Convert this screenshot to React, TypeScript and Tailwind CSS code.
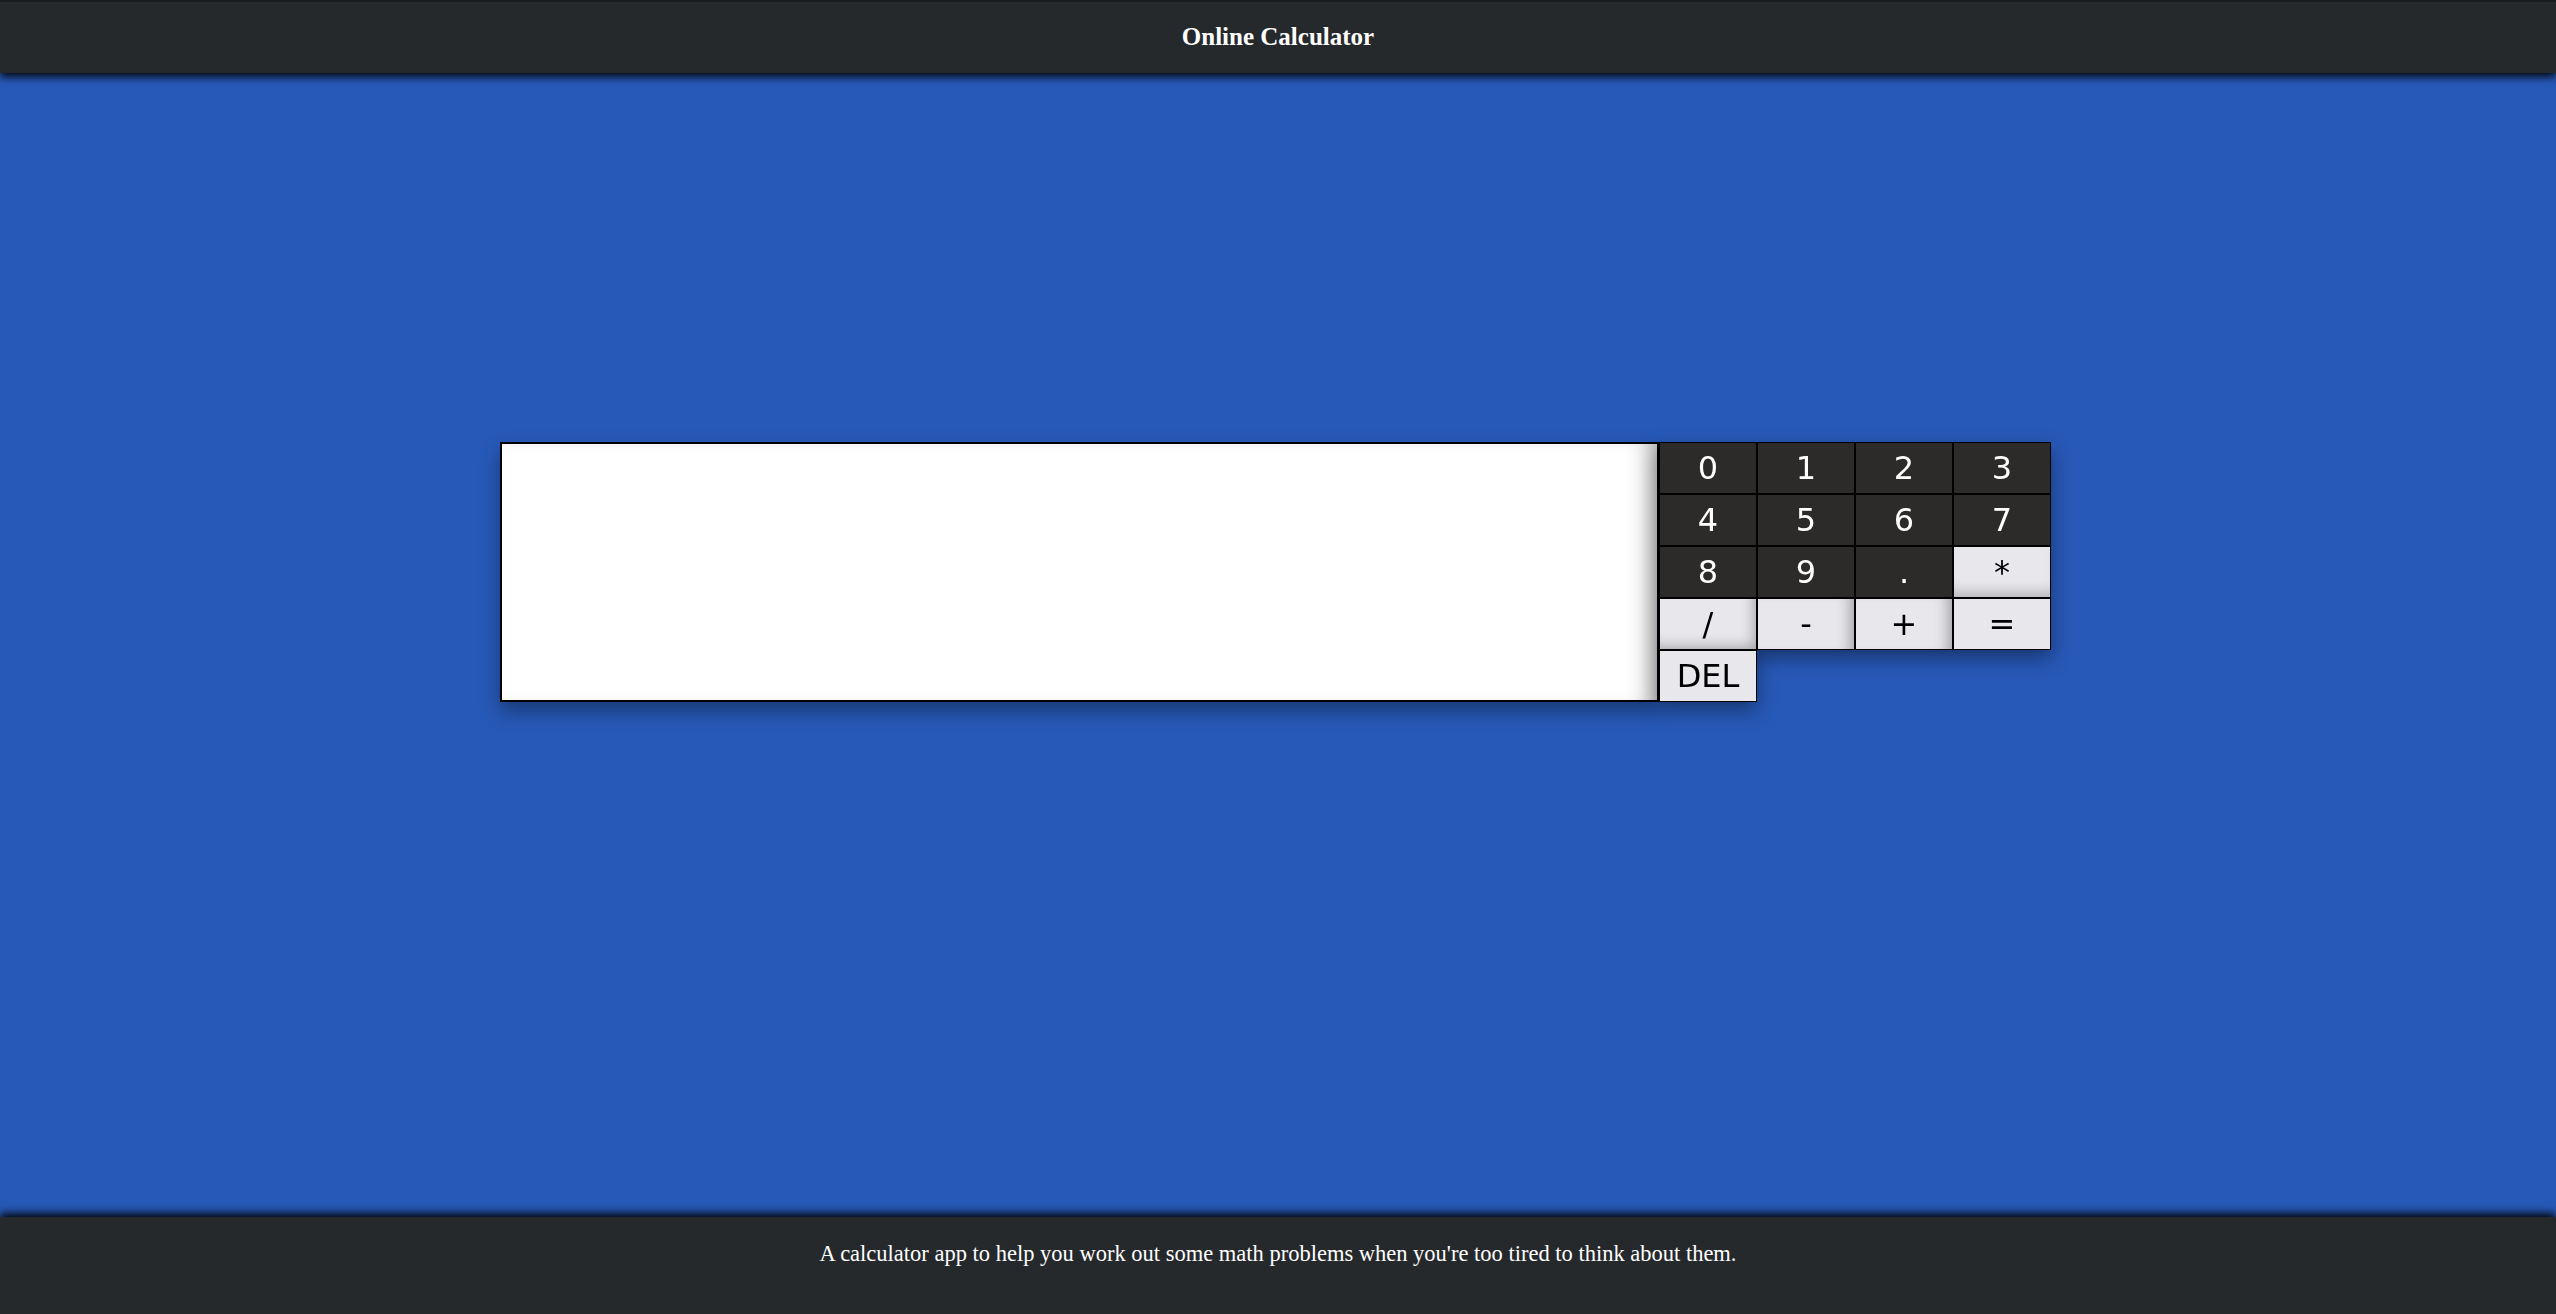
import React, { useState } from 'react';

type Key = { label: string; dark: boolean; shadow: string };

const keys: Key[] = [
  { label: '0', dark: true, shadow: '' },
  { label: '1', dark: true, shadow: '' },
  { label: '2', dark: true, shadow: '' },
  { label: '3', dark: true, shadow: '' },
  { label: '4', dark: true, shadow: '' },
  { label: '5', dark: true, shadow: '' },
  { label: '6', dark: true, shadow: '' },
  { label: '7', dark: true, shadow: '' },
  { label: '8', dark: true, shadow: '' },
  { label: '9', dark: true, shadow: '' },
  { label: '.', dark: true, shadow: '' },
  { label: '*', dark: false, shadow: 'shadow-[inset_0_-14px_14px_-10px_rgba(0,0,0,0.25)]' },
  { label: '/', dark: false, shadow: 'shadow-[inset_-12px_-12px_14px_-10px_rgba(0,0,0,0.3)]' },
  { label: '-', dark: false, shadow: 'shadow-[inset_-14px_0_14px_-10px_rgba(0,0,0,0.3)]' },
  { label: '+', dark: false, shadow: 'shadow-[inset_-14px_0_14px_-10px_rgba(0,0,0,0.3)]' },
  { label: '=', dark: false, shadow: '' },
  { label: 'DEL', dark: false, shadow: '' },
];

export default function App() {
  const [value, setValue] = useState('');

  const press = (k: string) => {
    if (k === 'DEL') setValue((v) => v.slice(0, -1));
    else if (k === '=') {
      try {
        // eslint-disable-next-line no-new-func
        setValue(String(Function(`return (${value})`)()));
      } catch {
        setValue('Error');
      }
    } else setValue((v) => v + k);
  };

  return (
    <div className="min-h-screen flex flex-col bg-[#2759b8]">
      {/* Header */}
      <header className="relative z-10 h-[73px] border-t-2 border-[#1b1c1e] bg-[#25292c] flex items-center justify-center shadow-[0_4px_8px_rgba(0,0,0,0.9)]">
        <h1 className="text-white text-[25px] font-bold font-['Liberation_Serif',serif] leading-none -mt-[2px]">
          Online Calculator
        </h1>
      </header>

      {/* Calculator */}
      <main className="flex-1 flex justify-center pt-[369px]">
        <div className="flex items-start h-[260px] mr-[5px]">
          <div className="w-[1159px] h-[260px] bg-white border-2 border-black shadow-[inset_-22px_0_22px_-14px_rgba(0,0,0,0.3),0_10px_18px_rgba(0,0,0,0.35)] px-4 flex items-center justify-end font-['DejaVu_Sans',sans-serif] text-[48px] text-black overflow-hidden">
            {value}
          </div>
          <div className="grid grid-cols-[repeat(4,98px)] auto-rows-[52px] drop-shadow-[0_8px_10px_rgba(0,0,0,0.4)]">
            {keys.map((k) => (
              <button
                key={k.label}
                onClick={() => press(k.label)}
                className={`border border-black flex items-center justify-center text-[32px] leading-none font-['DejaVu_Sans',sans-serif] ${
                  k.dark ? 'bg-[#2c2b29] text-white' : `bg-[#e8e7ec] text-black ${k.shadow}`
                }`}
              >
                {k.label}
              </button>
            ))}
          </div>
        </div>
      </main>

      {/* Footer */}
      <footer className="relative z-10 h-[97px] bg-[#25292c] pt-[24px] text-center shadow-[0_-4px_8px_rgba(0,0,0,0.9)]">
        <p className="text-white text-[22.5px] font-['Liberation_Serif',serif] leading-[26px]">
          A calculator app to help you work out some math problems when you're too tired to think about them.
        </p>
      </footer>
    </div>
  );
}
